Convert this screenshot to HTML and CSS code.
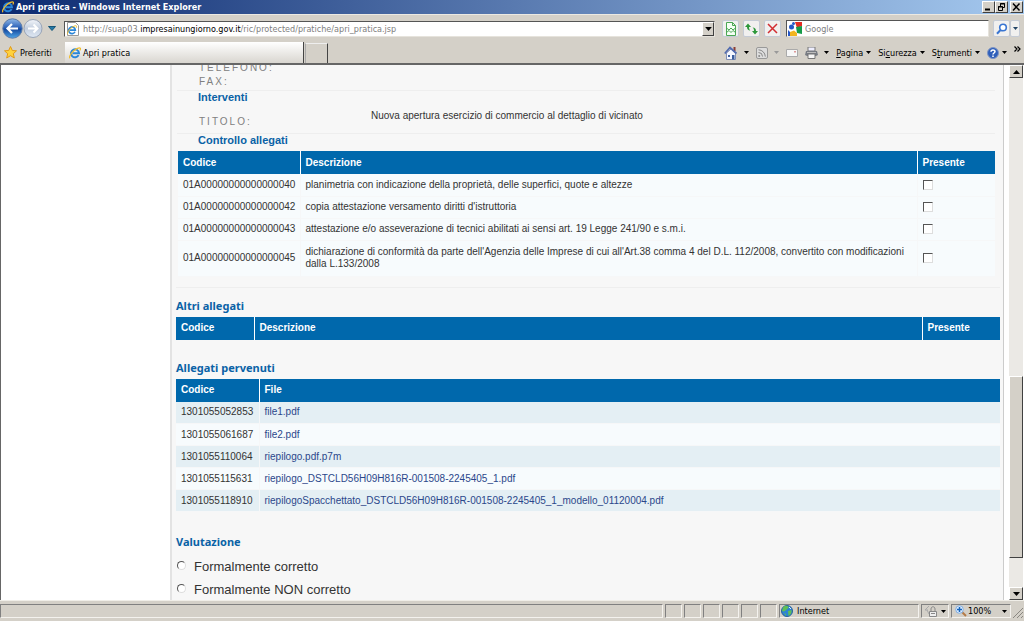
FILE: index.html
```html
<!DOCTYPE html>
<html lang="it">
<head>
<meta charset="utf-8">
<title>Apri pratica</title>
<link rel="stylesheet" href="styles.css">
</head>
<body>
<svg class="defs" aria-hidden="true">
  <defs>
    <linearGradient id="orb" x1="0" y1="0" x2="0" y2="1"><stop offset="0" stop-color="#8fb8e8"/><stop offset=".45" stop-color="#2c62b8"/><stop offset=".55" stop-color="#164a9f"/><stop offset="1" stop-color="#4fa6e8"/></linearGradient>
    <linearGradient id="orbOff" x1="0" y1="0" x2="0" y2="1"><stop offset="0" stop-color="#f2f5fa"/><stop offset=".5" stop-color="#c3cede"/><stop offset="1" stop-color="#dfe8f3"/></linearGradient>
    <symbol id="ie" viewBox="0 0 12 12">
      <path d="M9.6 8.1A4 4 0 1 1 10 6.2H3.4" fill="none" stroke="#2a86d8" stroke-width="2"/>
      <path d="M1 11.2C-.8 9.500 5 1.500 10.500.8c1.500 0 1 1.600.3 2.700" fill="none" stroke="#f1bd2c" stroke-width="1.200"/>
    </symbol>
    <symbol id="down" viewBox="0 0 5 3"><path d="M0 0h5L2.500 3z" fill="currentColor"/></symbol>
  </defs>
</svg>
<div class="window">
  <header class="titlebar">
    <svg class="ico12"><use href="#ie"/></svg>
    <span class="title">Apri pratica - Windows Internet Explorer</span>
    <div class="winbtns">
      <button class="winbtn" aria-label="Riduci"><svg width="9" height="8" viewBox="0 0 9 8"><path d="M1 6.500h5" stroke="#000" stroke-width="2"/></svg></button>
      <button class="winbtn" aria-label="Ripristina"><svg width="9" height="8" viewBox="0 0 9 8"><path d="M3.500 3V.5h4v4H6M3 1h5M1.500 3.500h4v4h-4zM1 4h5" fill="none" stroke="#000"/></svg></button>
      <button class="winbtn close" aria-label="Chiudi"><svg width="9" height="8" viewBox="0 0 9 8"><path d="M1 .5l6.500 7M7.500.5L1 7.500" stroke="#000" stroke-width="1.500"/></svg></button>
    </div>
  </header>

  <div class="navbar">
    <div class="history">
      <button class="plain" aria-label="Indietro"><svg width="21" height="21" viewBox="0 0 21 21"><circle cx="10.500" cy="10.500" r="9.700" fill="url(#orb)" stroke="#5b7aa8"/><path d="M16 10.500H6M10 6l-4.500 4.500L10 15" fill="none" stroke="#fff" stroke-width="2.200"/></svg></button>
      <button class="plain" aria-label="Avanti"><svg width="20" height="21" viewBox="0 0 20 21"><circle cx="10" cy="10.500" r="9" fill="url(#orbOff)" stroke="#99a5b8"/><path d="M5 10.500h9M10.500 6.500l4 4-4 4" fill="none" stroke="#fff" stroke-width="2"/></svg></button>
      <button class="plain recent" aria-label="Pagine recenti"><svg width="8" height="5" viewBox="0 0 8 5"><path d="M.5.5h7L4 4.500z" fill="#2379a8" stroke="#175577"/></svg></button>
    </div>
    <div class="address">
      <svg class="ico14" viewBox="0 0 14 14"><path d="M1.500.5h8l3 3v10h-11z" fill="#fff" stroke="#999"/><use href="#ie" x="1" y="3" width="10" height="10"/></svg>
      <div class="url">http://suap03.<b>impresainungiorno.gov.it</b>/ric/protected/pratiche/apri_pratica.jsp</div>
      <button class="drop" aria-label="Mostra indirizzi"><svg width="7" height="4"><use href="#down"/></svg></button>
    </div>
    <button class="tool" aria-label="Visualizzazione compatibilità"><svg width="12" height="14" viewBox="0 0 12 14"><path d="M1.500.5h6l3 3v10h-9zM7.500.5v3h3" fill="#f4fff4" stroke="#4aa653"/><path d="M1.500 6l2.500 2 2-2 2 2 2.500-2M1.500 10.500L4 8.500l2 2 2-2 2.500 2" fill="none" stroke="#4aa653"/></svg></button>
    <button class="tool" aria-label="Aggiorna"><svg width="13" height="12" viewBox="0 0 13 12"><path d="M0 4l3-3.500L6 4H4c0 2 .5 3 1.500 3.500C3 7.500 2 6 2 4zM13 8l-3 3.500L7 8h2c0-2-.5-3-1.500-3.500C10 4.500 11 6 11 8z" fill="#2d983b"/></svg></button>
    <button class="tool" aria-label="Interrompi"><svg width="11" height="11" viewBox="0 0 11 11"><path d="M1 1l9 9M10 1l-9 9" stroke="#d22d32" stroke-width="1.500"/></svg></button>
    <div class="search">
      <svg class="google" viewBox="0 0 14 14"><path d="M0 0h14v14H0z" fill="#fff"/><path d="M7 0h7v4L9 6z" fill="#e32b22"/><path d="M8 5l6-1v8l-5-1z" fill="#159b48"/><path d="M2 10l4-1.500L9 11v3H2z" fill="#f2b51e"/><circle cx="3.500" cy="5" r="2.500" fill="#2457c7"/><circle cx="5.500" cy="1.500" r="1.500" fill="#2457c7"/><path d="M0 8l2 2v4H0z" fill="#2457c7"/></svg>
      <input class="query" type="text" placeholder="Google" aria-label="Cerca">
    </div>
    <div class="go">
      <button class="tool lens" aria-label="Avvia ricerca"><svg width="12" height="12" viewBox="0 0 12 12"><circle cx="7" cy="4.500" r="3.300" fill="#fff" stroke="#3975d2" stroke-width="1.600"/><path d="M4.500 7L1 10.800" stroke="#3975d2" stroke-width="2"/></svg></button>
      <button class="tool more" aria-label="Opzioni di ricerca"><svg width="5" height="3"><use href="#down"/></svg></button>
    </div>
  </div>

  <div class="tabbar">
    <button class="fav"><svg width="13" height="13" viewBox="0 0 13 13"><path d="M6.500.5l1.800 4 4.200.3-3.200 2.900 1 4.300-3.800-2.300L2.700 12l1-4.300L.5 4.800l4.200-.3z" fill="#ffd23d" stroke="#e39a16"/></svg>Preferiti</button>
    <button class="tab"><svg class="ico12"><use href="#ie"/></svg>Apri pratica</button>
    <button class="newtab" aria-label="Nuova scheda"></button>
    <div class="commands">
      <button class="cmd" aria-label="Pagina iniziale"><svg width="14" height="14" viewBox="0 0 14 14"><path d="M2.500 7v6.500h9V7L7 3z" fill="#f5f7ff" stroke="#8391b5"/><path d="M9.500 1h2v4h-2z" fill="#8b3d35"/><path d="M.8 7.500L6 1.500l6.500 6" fill="none" stroke="#526baf" stroke-width="1.800"/><path d="M4 9h2v2H4zM8 9h2.500v4.500H8z" fill="#3c5f9f"/></svg><svg class="arrow wide"><use href="#down"/></svg></button>
      <button class="cmd off" aria-label="Feed"><svg width="12" height="12" viewBox="0 0 12 12"><rect x=".5" y=".5" width="11" height="11" rx="1.500" fill="#ddd" stroke="#999"/><path d="M2.500 5.500a4 4 0 0 1 4 4M2.500 2.800a7 7 0 0 1 6.800 6.800" fill="none" stroke="#888"/><circle cx="3.200" cy="9" r="1" fill="#888"/></svg><svg class="arrow wide"><use href="#down"/></svg></button>
      <button class="cmd" aria-label="Posta"><svg width="12" height="8" viewBox="0 0 12 8"><path d="M.5.5h11v7H.5z" fill="#f7f7f7" stroke="#aaa"/><path d="M8 2h2v1.500H8z" fill="#d99"/></svg></button>
      <button class="cmd" aria-label="Stampa"><svg width="13" height="12" viewBox="0 0 13 12"><path d="M3 0h7v4H3z" fill="#eef" stroke="#777"/><path d="M1 4h11l1 4-2 1H2L0 8z" fill="#777b83"/><path d="M3 7h7v4.500H3z" fill="#f6f6f6" stroke="#777"/><path d="M2 5.500h9" stroke="#bbb"/></svg><svg class="arrow wide"><use href="#down"/></svg></button>
      <button class="cmd"><span><u>P</u>agina</span><svg class="arrow"><use href="#down"/></svg></button>
      <button class="cmd"><span>Si<u>c</u>urezza</span><svg class="arrow"><use href="#down"/></svg></button>
      <button class="cmd"><span>S<u>t</u>rumenti</span><svg class="arrow"><use href="#down"/></svg></button>
      <button class="cmd" aria-label="Guida"><svg width="12" height="12" viewBox="0 0 12 12"><circle cx="6" cy="6" r="5.500" fill="#2f5fba" stroke="#8096c4"/><path d="M4 4.700C4 2.400 8 2.400 8 4.600 8 6 6 6 6 7.500M6 8.500V10" fill="none" stroke="#fff" stroke-width="1.500"/></svg><svg class="arrow"><use href="#down"/></svg></button>
      <button class="cmd chevrons" aria-label="Altri comandi"><svg width="7" height="6" viewBox="0 0 7 6"><path d="M.5.5L3 3 .5 5.500M3.500.5L6 3 3.500 5.500" fill="none" stroke="#000" stroke-width="1.200"/></svg></button>
    </div>
  </div>

  <div class="viewport">
    <main class="page">
      <section class="inset">
        <div class="field">TELEFONO:</div>
        <div class="field">FAX:</div>
        <h2 class="ruled">Interventi</h2>
        <div class="row"><div class="field">TITOLO:</div><div class="value">Nuova apertura esercizio di commercio al dettaglio di vicinato</div></div>
        <h2 class="ruled part">Controllo allegati</h2>
      </section>
      <table class="grid checks">
        <colgroup><col class="c-code"><col><col class="c-here"></colgroup>
        <thead><tr><th>Codice</th><th>Descrizione</th><th>Presente</th></tr></thead>
        <tbody>
          <tr><td>01A00000000000000040</td><td><label for="a40">planimetria con indicazione della proprietà, delle superfici, quote e altezze</label></td><td><input class="box" type="checkbox" id="a40"></td></tr>
          <tr><td>01A00000000000000042</td><td><label for="a42">copia attestazione versamento diritti d'istruttoria</label></td><td><input class="box" type="checkbox" id="a42"></td></tr>
          <tr><td>01A00000000000000043</td><td><label for="a43">attestazione e/o asseverazione di tecnici abilitati ai sensi art. 19 Legge 241/90 e s.m.i.</label></td><td><input class="box" type="checkbox" id="a43"></td></tr>
          <tr class="tall"><td>01A00000000000000045</td><td><label for="a45">dichiarazione di conformità da parte dell'Agenzia delle Imprese di cui all'Art.38 comma 4 del D.L. 112/2008, convertito con modificazioni dalla L.133/2008</label></td><td><input class="box" type="checkbox" id="a45"></td></tr>
        </tbody>
      </table>
      <section class="block first">
        <h2>Altri allegati</h2>
        <table class="grid">
          <colgroup><col class="c-other"><col><col class="c-here"></colgroup>
          <thead><tr><th>Codice</th><th>Descrizione</th><th>Presente</th></tr></thead>
        </table>
      </section>
      <section class="block">
        <h2>Allegati pervenuti</h2>
        <table class="grid files">
          <colgroup><col class="c-file"><col></colgroup>
          <thead><tr><th>Codice</th><th>File</th></tr></thead>
          <tbody>
            <tr><td>1301055052853</td><td><a href="#">file1.pdf</a></td></tr>
            <tr><td>1301055061687</td><td><a href="#">file2.pdf</a></td></tr>
            <tr><td>1301055110064</td><td><a href="#">riepilogo.pdf.p7m</a></td></tr>
            <tr><td>1301055115631</td><td><a href="#">riepilogo_DSTCLD56H09H816R-001508-2245405_1.pdf</a></td></tr>
            <tr><td>1301055118910</td><td><a href="#">riepilogoSpacchettato_DSTCLD56H09H816R-001508-2245405_1_modello_01120004.pdf</a></td></tr>
          </tbody>
        </table>
      </section>
      <section class="block last">
        <h2>Valutazione</h2>
        <label class="choice"><input class="dot" type="radio" name="esito">Formalmente corretto</label>
        <label class="choice"><input class="dot" type="radio" name="esito">Formalmente NON corretto</label>
      </section>
    </main>
    <div class="scrollbar">
      <button class="sbtn" aria-label="Scorri su"><svg width="7" height="4" viewBox="0 0 7 4"><path d="M0 4h7L3.500 0z"/></svg></button>
      <div class="before"></div>
      <div class="thumb"></div>
      <div class="after"></div>
      <button class="sbtn" aria-label="Scorri giù"><svg width="7" height="4" viewBox="0 0 7 4"><path d="M0 0h7L3.500 4z"/></svg></button>
    </div>
  </div>

  <footer class="status">
    <div class="pane message"></div>
    <div class="pane small"></div><div class="pane small"></div><div class="pane small"></div><div class="pane small"></div><div class="pane small"></div><div class="pane small"></div>
    <div class="pane zone"><svg width="12" height="12" viewBox="0 0 12 12"><circle cx="6" cy="6" r="5.500" fill="#2d83d4" stroke="#28609b"/><path d="M2 2.500C4 0 7 .8 7.500 2S6 4 5 5 3 7 1 6zM7 6l3.500-1c.5 3-1 5-3 6zM3 8l2 1v2z" fill="#60bf55"/><path d="M8 2l2 2" stroke="#d8f0ff"/></svg>Internet</div>
    <button class="pane protect" aria-label="Protezione"><svg width="13" height="12" viewBox="0 0 13 12"><path d="M5 1L1 5h3M3 5l2 4" fill="none" stroke="#aaa"/><path d="M7 6V4c0-3 4-3 4 0v2" fill="none" stroke="#888"/><path d="M5.500 6.500h7v5h-7z" fill="#eee" stroke="#888"/><path d="M7 8.500h4" stroke="#888"/></svg><svg class="arrow"><use href="#down"/></svg></button>
    <button class="pane zoomer"><svg width="12" height="12" viewBox="0 0 12 12"><path d="M7 7l4 4" stroke="#b57b47" stroke-width="2"/><circle cx="4.500" cy="4.500" r="3.800" fill="#dcedff" stroke="#83aee0"/><path d="M4.500 2v5M2 4.500h5" stroke="#1765bd" stroke-width="1.500"/></svg>100%<svg class="arrow"><use href="#down"/></svg></button>
    <svg class="grip" viewBox="0 0 10 10"><path d="M0 10L10 0M4 10l6-6M8 10l2-2" stroke="#8a8781"/></svg>
  </footer>
</div>
</body>
</html>
```
FILE: styles.css
```css
* { box-sizing: border-box; }
body { margin: 0; background: #d4d0c8; color: #333; font: 10px/12px "Liberation Sans", Arial, sans-serif; }
button { margin: 0; padding: 0; border: 0; background: none; color: #000; font: inherit; }
svg { display: block; flex: none; }
.defs { position: absolute; width: 0; height: 0; }
.window { display: flex; flex-direction: column; height: 100vh; overflow: hidden; }
.titlebar, .navbar, .tabbar, .status { flex: none; display: flex; align-items: center; font-family: "DejaVu Sans Condensed", "DejaVu Sans", sans-serif; font-size: 9px; }
.ico12 { width: 12px; height: 12px; }
.ico14 { width: 14px; height: 14px; }
.arrow { width: 5px; height: 3px; }

.titlebar { height: 14px; padding: 0 1px 0 2px; gap: 2px; background: linear-gradient(90deg, #0c2a70, #a5c9ef); color: #fff; }
.title { flex: 1; font-weight: bold; }
.winbtns { display: flex; }
.winbtn { display: grid; place-items: center; width: 13px; height: 12px; background: #d4d0c8; border: 1px solid; border-color: #fff #404040 #404040 #fff; }
.winbtn.close { margin-left: 2px; }

.navbar { height: 28px; padding: 0 4px 0 2px; gap: 4px; border-top: 1px solid #ece9e2; }
.history { display: flex; align-items: center; width: 58px; }
.history .recent { padding-left: 5px; }
.address { flex: 1; display: flex; align-items: center; gap: 3px; height: 16px; margin-right: 3px; padding-left: 1px; background: #fff; border: 1px solid; border-color: #555 #e6e3dc #e6e3dc #555; }
.url { flex: 1; color: #808080; white-space: nowrap; overflow: hidden; }
.url b { color: #000; font-weight: normal; }
.drop { display: grid; place-items: center; width: 12px; height: 14px; background: #d4d0c8; border: 1px solid; border-color: #fff #404040 #404040 #fff; }
.tool { display: grid; place-items: center; width: 17px; height: 17px; background: #f1f0ef; border: 1px solid #c5cbd5; border-radius: 2px; }
.navbar .tool { flex: none; }
.search { display: flex; align-items: center; gap: 3px; width: 203px; height: 17px; margin-left: 1px; padding-left: 1px; background: #fff; border: 1px solid; border-color: #555 #e6e3dc #e6e3dc #555; }
.google { width: 14px; height: 14px; }
.query { flex: 1; min-width: 0; padding: 0; border: 0; outline: 0; background: none; font: inherit; }
.query::placeholder { color: #808080; opacity: 1; }
.go { display: flex; }
.more { width: 10px; color: #246; }

.tabbar { height: 23px; padding-right: 3px; border-bottom: 2px solid #666; }
.fav { display: flex; align-items: center; gap: 3px; width: 61px; padding-left: 4px; }
.tab { display: flex; align-items: center; align-self: stretch; gap: 2px; width: 239px; margin-left: 4px; padding-left: 4px; background: linear-gradient(#fff, #d9d6d0); border-right: 1px solid #444; }
.newtab { align-self: stretch; width: 23px; margin-left: 1px; margin-top: 1px; border-right: 1px solid #444; border-left: 1px solid #aaa; border-top: 1px solid #eee; }
.commands { flex: 1; display: flex; align-items: center; justify-content: flex-end; gap: 7px; }
.cmd { display: flex; align-items: center; gap: 3px; }
.arrow.wide { margin-left: 3px; }
.cmd.off { color: #999; }
.cmd.chevrons { align-self: flex-start; }

.viewport { flex: 1; min-height: 0; display: flex; background: #fff; border-left: 1px solid #666; overflow: hidden; }
.page { flex: 1; min-width: 0; margin: 0 5px 0 169px; padding: 0 3px 0 4px; background: #f7f7f7; border-left: 2px solid #e3e3e3; border-right: 1px solid #ccc; }
.inset { margin: -4px 5px 0 1px; }
.field { padding-left: 22px; color: #808080; line-height: 14px; letter-spacing: 2px; }
.inset h2 { padding-left: 21px; }
h2 { margin: 0; color: #0a62a6; font-size: 11px; line-height: 13px; }
.ruled { margin-top: 1px; border-top: 1px solid #eee; }
.row { display: flex; align-items: center; height: 29px; }
.row .field { width: 194px; padding-top: 6px; }
.part { margin-top: 0; }
.value { padding-bottom: 5px; }

.grid { width: 100%; table-layout: fixed; border-collapse: collapse; }
.grid th, .grid td { height: 22px; padding: 0 5px; text-align: left; vertical-align: middle; }
.grid th { height: 23px; background: #0068ac; color: #fff; }
.grid th + th { border-left: 1px solid #fff; }
.grid td { background: #f7fbfd; border-bottom: 1px solid #f6f7f8; }
.grid td + td { border-left: 1px solid #f6f7f8; }
.grid a { color: #2b478b; text-decoration: none; }
.checks { width: calc(100% - 7px); margin: 4px 5px 0 2px; }
.grid .c-here { width: 78px; }
.c-code { width: 122px; }
.c-other { width: 78px; }
.c-file { width: 83px; }
.grid .tall td { height: 36px; }
.files tbody tr:nth-child(odd) td { background: #e4eff4; }
.box { display: block; appearance: none; width: 10px; height: 10px; margin: 0; background: #fff; border: 1px solid; border-color: #555 #ddd #ddd #555; }
.block { padding-top: 21px; }
.block.first { margin-top: 10px; padding-top: 11px; border-top: 1px solid #eee; }
.block.last { padding-top: 23px; }
.block h2 { margin-bottom: 5px; font-family: "Noto Sans", sans-serif; }
.choice { display: flex; align-items: center; height: 23px; gap: 8px; font-size: 13px; }
.dot { appearance: none; width: 9px; height: 9px; margin: 0 0 2px 1px; border: 1px solid; border-color: #555 #ddd #ddd #555; border-radius: 50%; background: #fff; }
.block.last h2 { margin-bottom: 7px; }

.scrollbar { flex: none; display: flex; flex-direction: column; width: 14px; margin-right: 1px; background: #ebe9e5; }
.sbtn { flex: none; display: grid; place-items: center; height: 13px; background: #d4d0c8; border: 1px solid; border-color: #fff #404040 #404040 #fff; }
.before { flex: 299; }
.thumb { flex: 181; background: #d4d0c8; border: 1px solid; border-color: #fff #404040 #404040 #fff; }
.after { flex: 29; }

.status { height: 21px; gap: 2px; padding: 3px 1px 3px 0; border-top: 1px solid #f0eee8; }
.pane { display: flex; align-items: center; align-self: stretch; border: 1px solid; border-color: #808080 #f4f2ee #f4f2ee #808080; }
.message { flex: 1; }
.small { width: 17px; }
.zone { width: 140px; padding-left: 1px; gap: 4px; color: #000; }
.protect { width: 28px; padding-left: 2px; gap: 4px; }
.zoomer { width: 60px; padding-left: 3px; gap: 1px; }
.zoomer .arrow { margin-left: 10px; }
.grip { width: 10px; height: 10px; align-self: flex-end; }
```
